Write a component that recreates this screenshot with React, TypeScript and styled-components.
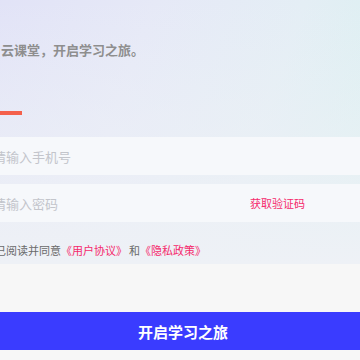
import React from "react";
import styled, { createGlobalStyle } from "styled-components";

const Global = createGlobalStyle`
  html, body { margin: 0; padding: 0; background: #f7f7f7; overflow: hidden; }
  body { font-family: "Noto Sans CJK SC", "Noto Sans", sans-serif; }
  * { box-sizing: border-box; }
`;

const Page = styled.div`
  width: 360px;
  height: 360px;
  overflow: hidden;
  background: #f7f7f7;
`;

const Shift = styled.div`
  margin-left: -20px;
  width: 406px;
`;

const Hero = styled.div`
  height: 264px;
  padding-top: 41px;
  background:
    linear-gradient(180deg, rgba(238,241,246,0) 0%, rgba(238,241,246,0.55) 55%, #eef1f6 100%),
    linear-gradient(110deg, #e1e2f7 0%, #e6e9f7 35%, #e4eef5 65%, #d6f1ef 100%);
  display: flex;
  flex-direction: column;
`;

const Subtitle = styled.div`
  padding-left: 21px;
  font-size: 13px;
  line-height: 18px;
  font-weight: 700;
  color: #8e8e8e;
  white-space: nowrap;
`;

const Bar = styled.div`
  margin-top: 52px;
  width: 42px;
  height: 4px;
  background: #f4604b;
`;

const Form = styled.div`
  margin-top: 22px;
  display: flex;
  flex-direction: column;
  gap: 9px;
`;

const Field = styled.div`
  height: 38px;
  background: #f6f8fb;
  display: flex;
  align-items: center;
  padding-left: 13px;
  padding-right: 81px;
`;

const Input = styled.input`
  flex: 1;
  min-width: 0;
  border: none;
  outline: none;
  background: transparent;
  font-family: inherit;
  font-size: 13px;
  padding: 0;
  color: #333;
  &::placeholder { color: #c3c5cb; }
`;

const CodeBtn = styled.span`
  font-size: 11px;
  color: #f5296c;
  white-space: nowrap;
`;

const Agree = styled.div`
  margin-top: 21px;
  padding-left: 4px;
  font-size: 11px;
  line-height: 14px;
  color: #6a6a6a;
  white-space: nowrap;
`;

const Link = styled.span`
  color: #f5296c;
`;

const Joiner = styled.span`
  margin: 0 0 0 2px;
`;

const Submit = styled.button`
  display: block;
  margin-top: 48px;
  width: 100%;
  height: 38px;
  border: none;
  background: #3a3cff;
  color: #fff;
  font-family: inherit;
  font-size: 15px;
  font-weight: 600;
  padding: 0;
`;

export default function App() {
  return (
    <Page>
      <Global />
      <Shift>
        <Hero>
          <Subtitle>云课堂，开启学习之旅。</Subtitle>
          <Bar />
          <Form>
            <Field>
              <Input placeholder="请输入手机号" />
            </Field>
            <Field>
              <Input placeholder="请输入密码" />
              <CodeBtn>获取验证码</CodeBtn>
            </Field>
          </Form>
          <Agree>
            我已阅读并同意<Link>《用户协议》</Link>
            <Joiner>和</Joiner>
            <Link>《隐私政策》</Link>
          </Agree>
        </Hero>
        <Submit>开启学习之旅</Submit>
      </Shift>
    </Page>
  );
}
